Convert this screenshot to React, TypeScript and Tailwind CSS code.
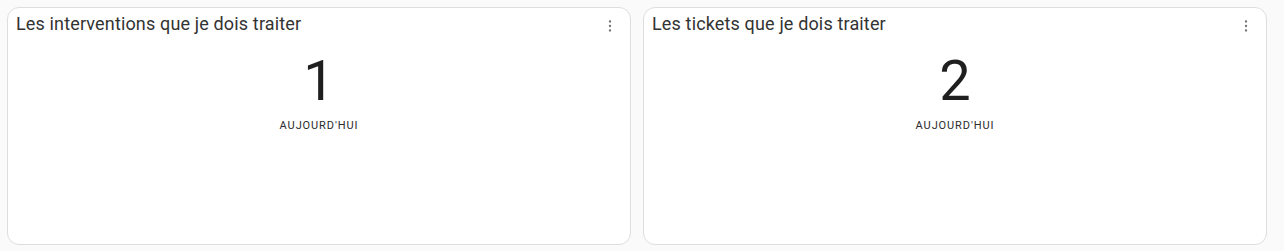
const widgets = [
  { title: "Les interventions que je dois traiter", value: 1, period: "Aujourd'hui" },
  { title: "Les tickets que je dois traiter", value: 2, period: "Aujourd'hui" },
]

function DotsIcon() {
  return (
    <svg width="6" height="14" viewBox="0 0 6 14" fill="currentColor">
      <circle cx="3" cy="2.5" r="1.15" />
      <circle cx="3" cy="7" r="1.15" />
      <circle cx="3" cy="11.5" r="1.15" />
    </svg>
  )
}

function CounterCard({ title, value, period }: { title: string; value: number; period: string }) {
  return (
    <div className="flex h-[238px] flex-col rounded-[12px] border border-[#dedede] bg-white">
      <div className="flex items-start justify-between pl-[8px] pr-[17px] pt-[4px]">
        <h3 className="text-[18px] leading-[24px] tracking-[0.15px] text-[#333333]">{title}</h3>
        <button className="mt-[7px] text-[#707070]">
          <DotsIcon />
        </button>
      </div>
      <div className="flex flex-col items-center">
        <span className="mt-[13px] text-[56px] leading-[64px] font-normal text-[#1f1f1f]">{value}</span>
        <span className="mt-[6px] text-[11px] leading-[14px] tracking-[0.9px] uppercase text-[#2b2b2b]">
          {period}
        </span>
      </div>
    </div>
  )
}

export default function App() {
  return (
    <div
      className="min-h-[251px] bg-[#fafafa] pl-[7px] pr-[17px] pt-[7px]"
      style={{ fontFamily: "Roboto, 'Liberation Sans', sans-serif" }}
    >
      <div className="grid grid-cols-2 gap-[12px]">
        {widgets.map((w) => (
          <CounterCard key={w.title} {...w} />
        ))}
      </div>
    </div>
  )
}
